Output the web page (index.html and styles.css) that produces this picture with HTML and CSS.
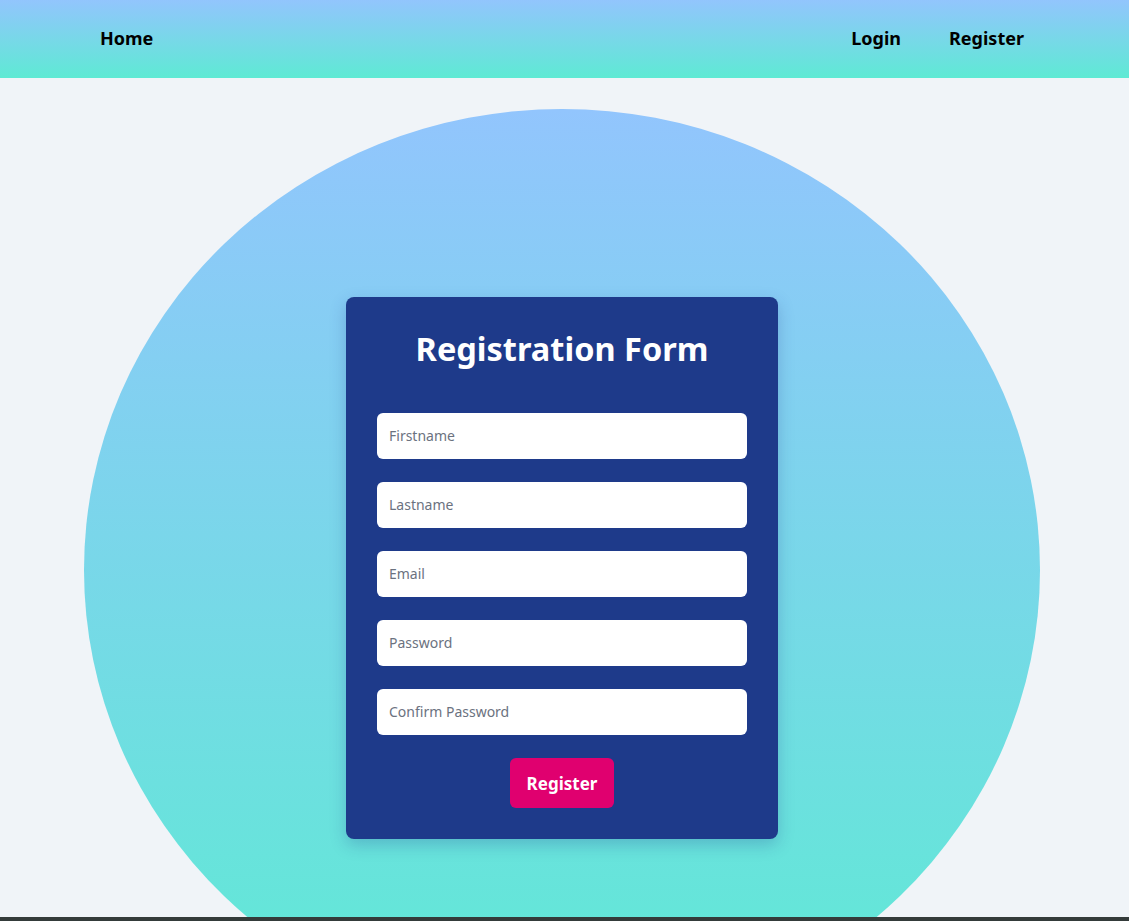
FILE: index.html
```html
<!DOCTYPE html>
<html lang="en">
<head>
<meta charset="utf-8">
<title>Registration</title>
<link rel="stylesheet" href="styles.css">
</head>
<body>
<nav class="navbar">
  <a class="nav-link" href="#">Home</a>
  <div class="nav-right">
    <a class="nav-link" href="#">Login</a>
    <a class="nav-link" href="#">Register</a>
  </div>
</nav>
<main class="main">
  <div class="blob">
    <form class="card">
      <h1 class="card-title">Registration Form</h1>
      <div class="fields">
        <input class="field" type="text" placeholder="Firstname">
        <input class="field" type="text" placeholder="Lastname">
        <input class="field" type="email" placeholder="Email">
        <input class="field" type="password" placeholder="Password">
        <input class="field" type="password" placeholder="Confirm Password">
        <button class="btn" type="button">Register</button>
      </div>
    </form>
  </div>
</main>
<footer class="footer"></footer>
</body>
</html>
```
FILE: styles.css
```css
* { box-sizing: border-box; }
html, body { margin: 0; padding: 0; }
body {
  background: #f0f4f8;
  font-family: "Noto Sans", "Open Sans", sans-serif;
  color: #000;
}
.navbar {
  height: 78px;
  display: flex;
  align-items: center;
  justify-content: space-between;
  padding: 0 105px 2px 100px;
  background: linear-gradient(to bottom, #92c5fd, #5eead4);
}
.nav-right { display: flex; gap: 48px; }
.nav-link {
  color: #000;
  text-decoration: none;
  font-weight: 700;
  font-size: 18px;
  line-height: 24px;
}
.main {
  height: 839px;
  overflow: hidden;
  padding: 31px 0 0 84px;
}
.blob {
  width: 956px;
  height: 922px;
  border-radius: 50%;
  background: linear-gradient(to bottom, #92c5fd, #5eead4);
  display: flex;
  align-items: center;
  justify-content: center;
}
.card {
  width: 432px;
  margin-top: -5px;
  background: #1e3a8a;
  border-radius: 8px;
  padding: 30px 31px 31px;
  box-shadow: 0 6px 16px rgba(30, 58, 138, 0.25);
}
.card-title {
  margin: 0 0 42px;
  text-align: center;
  color: #fff;
  font-size: 32.5px;
  line-height: 44px;
  font-weight: 700;
}
.fields {
  display: flex;
  flex-direction: column;
  align-items: center;
  gap: 23px;
}
.field {
  width: 100%;
  height: 46px;
  border: none;
  border-radius: 6px;
  background: #fff;
  padding: 0 12px;
  font-family: inherit;
  font-size: 14px;
  outline: none;
}
.field::placeholder { color: #6b7280; }
.btn {
  width: 104px;
  height: 50px;
  border: none;
  border-radius: 6px;
  background: #e0006f;
  color: #fff;
  font-family: inherit;
  font-weight: 700;
  font-size: 17px;
  padding: 2px 0 0;
}
.footer {
  height: 40px;
  background: #343b3a;
}
```
